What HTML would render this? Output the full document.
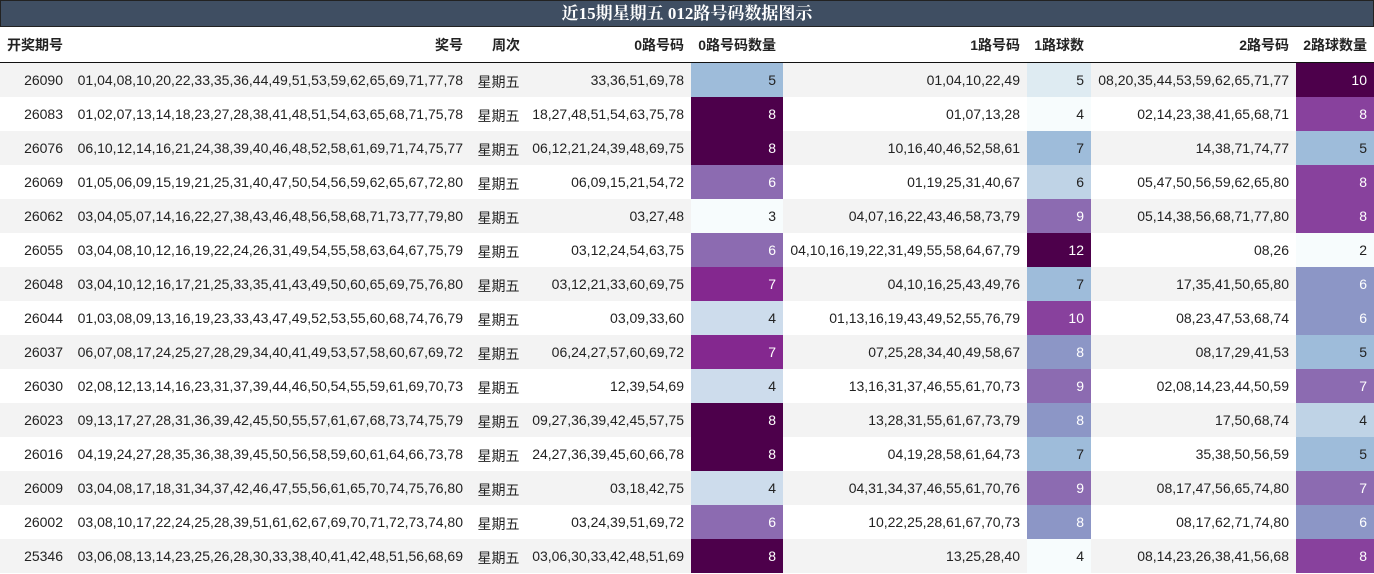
<!DOCTYPE html><html><head><meta charset="utf-8"><style>
body{margin:0;width:1374px;height:574px;overflow:hidden;background:#fff;font-family:"Liberation Sans","Noto Sans CJK SC",sans-serif;font-size:14px;color:#222}
.t{height:25px;background:#3f4e62;border:1px solid #222;color:#fff;font-weight:bold;font-size:17px;text-align:center;line-height:26px;font-family:"Liberation Serif","Noto Serif CJK SC",serif}
table{border-collapse:collapse;table-layout:fixed;width:1374px}
td,th{padding:0 7px 0 0;text-align:right;white-space:nowrap;overflow:hidden}
th{height:35px;font-weight:bold;border-bottom:1px solid #111;font-size:14px}
td{height:34px}
tr:nth-child(odd) td{background:#f3f3f3}
tr td.c{text-align:center;padding:3px 0 0 0;height:31px}
.w{color:#fff}
</style></head><body>
<div class="t">近15期星期五 012路号码数据图示</div>
<table>
<colgroup><col style="width:70px"><col style="width:400px"><col style="width:57px"><col style="width:164px"><col style="width:92px"><col style="width:244px"><col style="width:64px"><col style="width:205px"><col style="width:78px"></colgroup>
<thead><tr><th style="text-align:left;padding-left:7px">开奖期号</th><th>奖号</th><th>周次</th><th>0路号码</th><th>0路号码数量</th><th>1路号码</th><th>1路球数</th><th>2路号码</th><th>2路球数量</th></tr></thead>
<tbody>
<tr><td>26090</td><td>01,04,08,10,20,22,33,35,36,44,49,51,53,59,62,65,69,71,77,78</td><td class="c">星期五</td><td>33,36,51,69,78</td><td style="background:#9ebcda!important">5</td><td>01,04,10,22,49</td><td style="background:#deebf2!important">5</td><td>08,20,35,44,53,59,62,65,71,77</td><td class="w" style="background:#4d004b!important">10</td></tr>
<tr><td>26083</td><td>01,02,07,13,14,18,23,27,28,38,41,48,51,54,63,65,68,71,75,78</td><td class="c">星期五</td><td>18,27,48,51,54,63,75,78</td><td class="w" style="background:#4d004b">8</td><td>01,07,13,28</td><td style="background:#f7fcfd">4</td><td>02,14,23,38,41,65,68,71</td><td class="w" style="background:#88419d">8</td></tr>
<tr><td>26076</td><td>06,10,12,14,16,21,24,38,39,40,46,48,52,58,61,69,71,74,75,77</td><td class="c">星期五</td><td>06,12,21,24,39,48,69,75</td><td class="w" style="background:#4d004b!important">8</td><td>10,16,40,46,52,58,61</td><td style="background:#9ebcda!important">7</td><td>14,38,71,74,77</td><td style="background:#9ebcda!important">5</td></tr>
<tr><td>26069</td><td>01,05,06,09,15,19,21,25,31,40,47,50,54,56,59,62,65,67,72,80</td><td class="c">星期五</td><td>06,09,15,21,54,72</td><td class="w" style="background:#8c6bb1">6</td><td>01,19,25,31,40,67</td><td style="background:#bfd3e6">6</td><td>05,47,50,56,59,62,65,80</td><td class="w" style="background:#88419d">8</td></tr>
<tr><td>26062</td><td>03,04,05,07,14,16,22,27,38,43,46,48,56,58,68,71,73,77,79,80</td><td class="c">星期五</td><td>03,27,48</td><td style="background:#f7fcfd!important">3</td><td>04,07,16,22,43,46,58,73,79</td><td class="w" style="background:#8c6bb1!important">9</td><td>05,14,38,56,68,71,77,80</td><td class="w" style="background:#88419d!important">8</td></tr>
<tr><td>26055</td><td>03,04,08,10,12,16,19,22,24,26,31,49,54,55,58,63,64,67,75,79</td><td class="c">星期五</td><td>03,12,24,54,63,75</td><td class="w" style="background:#8c6bb1">6</td><td>04,10,16,19,22,31,49,55,58,64,67,79</td><td class="w" style="background:#4d004b">12</td><td>08,26</td><td style="background:#f7fcfd">2</td></tr>
<tr><td>26048</td><td>03,04,10,12,16,17,21,25,33,35,41,43,49,50,60,65,69,75,76,80</td><td class="c">星期五</td><td>03,12,21,33,60,69,75</td><td class="w" style="background:#84288f!important">7</td><td>04,10,16,25,43,49,76</td><td style="background:#9ebcda!important">7</td><td>17,35,41,50,65,80</td><td class="w" style="background:#8c96c6!important">6</td></tr>
<tr><td>26044</td><td>01,03,08,09,13,16,19,23,33,43,47,49,52,53,55,60,68,74,76,79</td><td class="c">星期五</td><td>03,09,33,60</td><td style="background:#cddcec">4</td><td>01,13,16,19,43,49,52,55,76,79</td><td class="w" style="background:#88419d">10</td><td>08,23,47,53,68,74</td><td class="w" style="background:#8c96c6">6</td></tr>
<tr><td>26037</td><td>06,07,08,17,24,25,27,28,29,34,40,41,49,53,57,58,60,67,69,72</td><td class="c">星期五</td><td>06,24,27,57,60,69,72</td><td class="w" style="background:#84288f!important">7</td><td>07,25,28,34,40,49,58,67</td><td class="w" style="background:#8c96c6!important">8</td><td>08,17,29,41,53</td><td style="background:#9ebcda!important">5</td></tr>
<tr><td>26030</td><td>02,08,12,13,14,16,23,31,37,39,44,46,50,54,55,59,61,69,70,73</td><td class="c">星期五</td><td>12,39,54,69</td><td style="background:#cddcec">4</td><td>13,16,31,37,46,55,61,70,73</td><td class="w" style="background:#8c6bb1">9</td><td>02,08,14,23,44,50,59</td><td class="w" style="background:#8c6bb1">7</td></tr>
<tr><td>26023</td><td>09,13,17,27,28,31,36,39,42,45,50,55,57,61,67,68,73,74,75,79</td><td class="c">星期五</td><td>09,27,36,39,42,45,57,75</td><td class="w" style="background:#4d004b!important">8</td><td>13,28,31,55,61,67,73,79</td><td class="w" style="background:#8c96c6!important">8</td><td>17,50,68,74</td><td style="background:#bfd3e6!important">4</td></tr>
<tr><td>26016</td><td>04,19,24,27,28,35,36,38,39,45,50,56,58,59,60,61,64,66,73,78</td><td class="c">星期五</td><td>24,27,36,39,45,60,66,78</td><td class="w" style="background:#4d004b">8</td><td>04,19,28,58,61,64,73</td><td style="background:#9ebcda">7</td><td>35,38,50,56,59</td><td style="background:#9ebcda">5</td></tr>
<tr><td>26009</td><td>03,04,08,17,18,31,34,37,42,46,47,55,56,61,65,70,74,75,76,80</td><td class="c">星期五</td><td>03,18,42,75</td><td style="background:#cddcec!important">4</td><td>04,31,34,37,46,55,61,70,76</td><td class="w" style="background:#8c6bb1!important">9</td><td>08,17,47,56,65,74,80</td><td class="w" style="background:#8c6bb1!important">7</td></tr>
<tr><td>26002</td><td>03,08,10,17,22,24,25,28,39,51,61,62,67,69,70,71,72,73,74,80</td><td class="c">星期五</td><td>03,24,39,51,69,72</td><td class="w" style="background:#8c6bb1">6</td><td>10,22,25,28,61,67,70,73</td><td class="w" style="background:#8c96c6">8</td><td>08,17,62,71,74,80</td><td class="w" style="background:#8c96c6">6</td></tr>
<tr><td>25346</td><td>03,06,08,13,14,23,25,26,28,30,33,38,40,41,42,48,51,56,68,69</td><td class="c">星期五</td><td>03,06,30,33,42,48,51,69</td><td class="w" style="background:#4d004b!important">8</td><td>13,25,28,40</td><td style="background:#f7fcfd!important">4</td><td>08,14,23,26,38,41,56,68</td><td class="w" style="background:#88419d!important">8</td></tr>
</tbody></table>
</body></html>
